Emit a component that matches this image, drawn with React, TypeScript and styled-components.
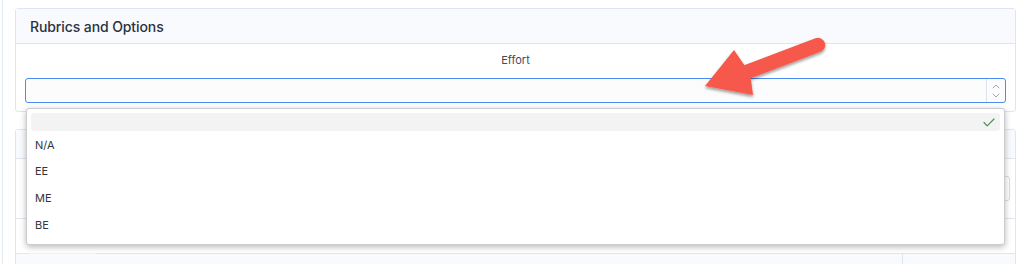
import React from "react";
import styled, { createGlobalStyle } from "styled-components";

const GlobalStyle = createGlobalStyle`
  html, body { margin: 0; padding: 0; background: #ffffff; }
  body {
    font-family: Inter, "Noto Sans", "Liberation Sans", sans-serif;
    color: #2c3442;
    -webkit-font-smoothing: antialiased;
  }
  * { box-sizing: border-box; }
`;

const Screen = styled.div`
  position: relative;
  width: 1029px;
  height: 264px;
  overflow: hidden;
`;

const Page = styled.div`
  margin-left: 2px;
  border-left: 1px solid #e3e9f3;
  padding: 8px 13px 0 12px;
  height: 264px;
`;

const Card = styled.section<{ $gap?: number }>`
  border: 1px solid #dfe6f1;
  border-radius: 3px;
  background: #ffffff;
  margin-top: ${(p) => p.$gap ?? 0}px;
`;

const CardHeader = styled.header<{ $h: number }>`
  height: ${(p) => p.$h}px;
  background: #f8fafd;
  border-bottom: 1px solid #dfe6f1;
  display: flex;
  align-items: center;
  padding-left: 14px;
`;

const Title = styled.h2`
  margin: 0;
  font-size: 14px;
  font-weight: 500;
  color: #2b3240;
  letter-spacing: -0.1px;
`;

const CardBody = styled.div`
  padding: 8px 9px 8px;
`;

const FieldLabel = styled.div`
  text-align: center;
  font-size: 11px;
  line-height: 16px;
  color: #454b57;
  margin-bottom: 10px;
`;

const SelectWrap = styled.div`
  position: relative;
`;

const SelectBox = styled.div`
  height: 25px;
  border: 1px solid #4b8cf2;
  border-radius: 3px;
  background: #fcfcfc;
  display: flex;
  justify-content: flex-end;
`;

const Stepper = styled.div`
  width: 19px;
  border-left: 1px solid #dde4ee;
  display: flex;
  flex-direction: column;
  align-items: center;
  justify-content: center;
  gap: 4px;
  color: #9aa3b5;
`;

const Menu = styled.ul`
  position: absolute;
  left: 1px;
  right: 1px;
  top: calc(100% + 5px);
  margin: 0;
  padding: 4px 4px 6px;
  list-style: none;
  background: #ffffff;
  border: 1px solid #cdcdcd;
  border-radius: 3px;
  box-shadow: 0 2px 6px rgba(0, 0, 0, 0.28);
  z-index: 5;
`;

const MenuItem = styled.li<{ $selected?: boolean; $h: number }>`
  height: ${(p) => p.$h}px;
  display: flex;
  align-items: center;
  justify-content: space-between;
  padding: 1px 5px 0 4px;
  border-radius: 3px;
  font-size: 11px;
  color: #33363d;
  background: ${(p) => (p.$selected ? "#f3f3f3" : "transparent")};
`;

const Section = styled.div<{ $h: number }>`
  height: ${(p) => p.$h}px;
  border-bottom: 1px solid #dfe6f1;
  display: flex;
  align-items: center;
  justify-content: flex-end;
  padding-right: 5px;
`;

const TextInput = styled.div`
  width: 600px;
  height: 25px;
  border: 1px solid #d3dce9;
  border-radius: 3px;
  background: #ffffff;
`;

const TabStrip = styled.div`
  display: flex;
  margin-top: -1px;
`;

const Tab = styled.div`
  margin-left: 13px;
  width: 67px;
  height: 1px;
  background: #eef2f8;
`;

const TableRow = styled.div`
  display: flex;
  height: 20px;
  background: #f8fafd;
`;

const Cell = styled.div<{ $w?: number }>`
  flex: ${(p) => (p.$w ? `0 0 ${p.$w}px` : "1 1 auto")};
  border-right: ${(p) => (p.$w ? "none" : "1px solid #dfe6f1")};
`;

const ArrowSvg = styled.svg`
  position: absolute;
  left: 696px;
  top: 28px;
  pointer-events: none;
  z-index: 10;
`;

const Check = () => (
  <svg width="12" height="9" viewBox="0 0 12 9">
    <polyline
      points="1,4.5 4.2,7.8 11,1"
      fill="none"
      stroke="#4f8f52"
      strokeWidth="1.2"
      strokeLinecap="round"
      strokeLinejoin="round"
    />
  </svg>
);

const Chevron = ({ up }: { up?: boolean }) => (
  <svg width="8" height="5" viewBox="0 0 8 5">
    <polyline
      points={up ? "0.8,4.2 4,1 7.2,4.2" : "0.8,0.8 4,4 7.2,0.8"}
      fill="none"
      stroke="currentColor"
      strokeWidth="1"
    />
  </svg>
);

const options = ["", "N/A", "EE", "ME", "BE"];

export default function App() {
  return (
    <>
      <GlobalStyle />
      <Screen>
        <Page>
          <Card>
            <CardHeader $h={35}>
              <Title>Rubrics and Options</Title>
            </CardHeader>
            <CardBody>
              <FieldLabel>Effort</FieldLabel>
              <SelectWrap>
                <SelectBox>
                  <Stepper>
                    <Chevron up />
                    <Chevron />
                  </Stepper>
                </SelectBox>
                <Menu>
                  {options.map((o, i) => (
                    <MenuItem key={i} $selected={i === 0} $h={i === 0 ? 18 : 26.67}>
                      <span>{o}</span>
                      {i === 0 && <Check />}
                    </MenuItem>
                  ))}
                </Menu>
              </SelectWrap>
            </CardBody>
          </Card>
          <Card $gap={17}>
            <CardHeader $h={29} />
            <Section $h={60}>
              <TextInput />
            </Section>
            <Section $h={35} />
            <TabStrip>
              <Tab />
            </TabStrip>
            <TableRow>
              <Cell />
              <Cell $w={112} />
            </TableRow>
          </Card>
        </Page>
        <ArrowSvg width="140" height="76" viewBox="696 28 140 76">
          <defs>
            <filter id="arrowShadow" x="-20%" y="-20%" width="140%" height="160%">
              <feDropShadow dx="0" dy="2" stdDeviation="1.6" floodColor="#000" floodOpacity="0.4" />
            </filter>
          </defs>
          <g filter="url(#arrowShadow)" fill="#f6594b">
            <line x1="818" y1="45" x2="744" y2="73" stroke="#f6594b" strokeWidth="14.5" strokeLinecap="round" />
            <polygon points="705,86 734,50 745,66 751,80 753,95" />
          </g>
        </ArrowSvg>
      </Screen>
    </>
  );
}
